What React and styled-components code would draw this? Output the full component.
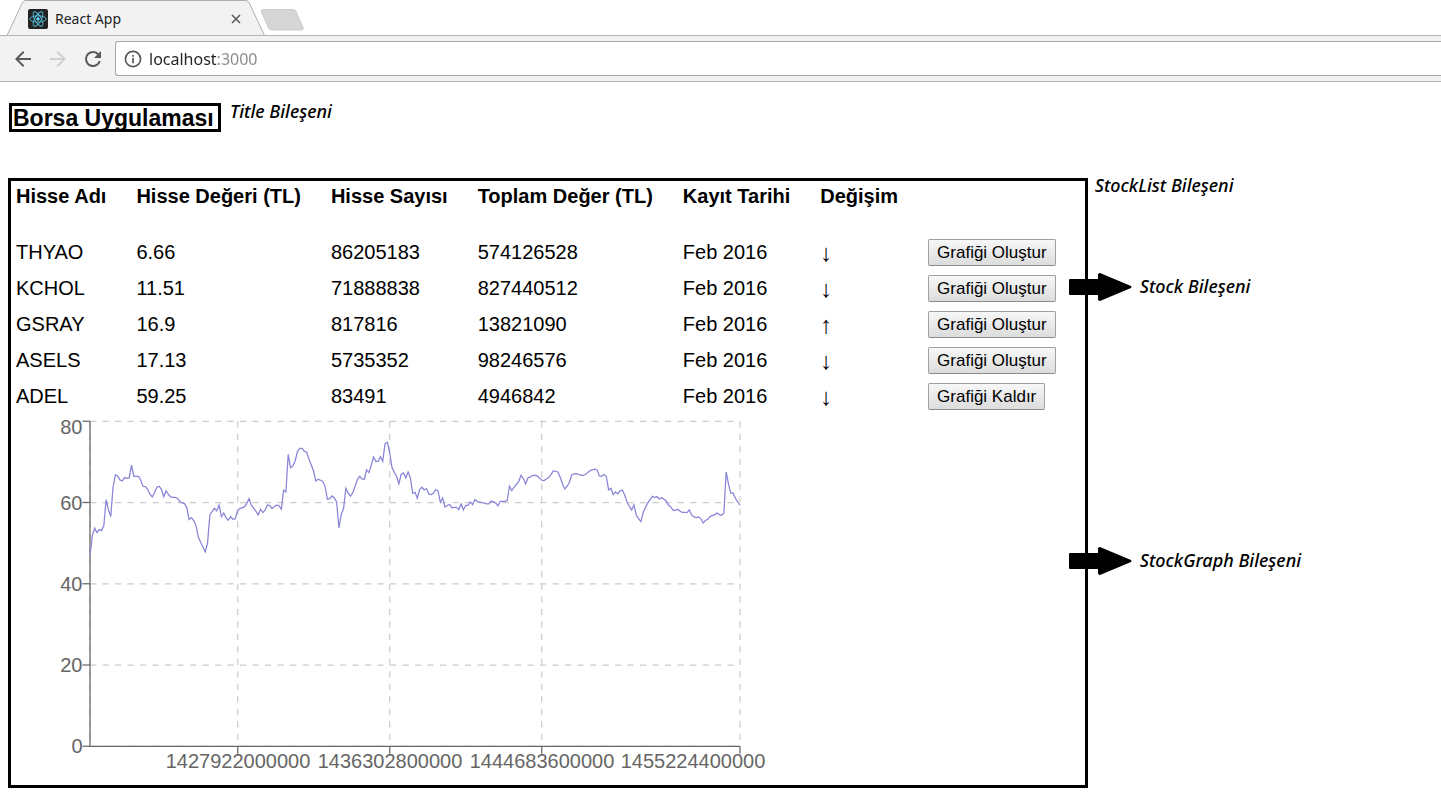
import React from "react";
import styled, { createGlobalStyle } from "styled-components";

const GlobalStyle = createGlobalStyle`
  * { box-sizing: border-box; }
  body {
    margin: 0;
    background: #fff;
    color: #000;
    font-family: "Liberation Sans", Arial, sans-serif;
    font-size: 20px;
    overflow-x: hidden;
  }
`;

const uiFont = `"Noto Sans", "Segoe UI", sans-serif`;

/* ---------- browser window ---------- */

const TabStrip = styled.div`
  display: flex;
  align-items: flex-start;
  height: 36px;
  padding-left: 7px;
  border-bottom: 1px solid #b3b3b3;
`;

const Tab = styled.div`
  position: relative;
  display: flex;
  align-items: center;
  width: 258px;
  height: 36px;
  padding: 2px 19px 0 21px;
  font-family: ${uiFont};
  font-size: 14px;
  line-height: 20px;
`;

const TabShape = styled.svg`
  position: absolute;
  inset: 0;
  width: 100%;
  height: 100%;
  z-index: -1;
`;

const TabTitle = styled.span`
  flex: 1;
  margin-left: 7px;
  color: #222;
`;

const IconButton = styled.button`
  display: flex;
  align-items: center;
  justify-content: center;
  width: ${(p) => p.$size}px;
  height: ${(p) => p.$size}px;
  padding: 0;
  border: 0;
  background: none;
  color: ${(p) => (p.disabled ? "#d0d0d0" : "#5a5a5a")};
`;

const NewTabButton = styled.button`
  width: 44px;
  height: 24px;
  margin: 8px 0 0 -5px;
  padding: 0;
  border: 0;
  background: none;
`;

const Toolbar = styled.div`
  display: flex;
  align-items: center;
  height: 46px;
  padding-left: 11px;
  border-bottom: 1px solid #b6b6b6;
  background: #f2f2f2;
`;

const NavButtons = styled.div`
  display: flex;
  gap: 11px;
`;

const AddressBar = styled.label`
  display: flex;
  flex: 1;
  align-items: center;
  height: 35px;
  margin-left: 10px;
  padding-left: 8px;
  border: 1px solid #a6a6a6;
  border-right: 0;
  border-radius: 3px 0 0 3px;
  background: #fff;
`;

const AddressInput = styled.input`
  flex: 1;
  height: 28px;
  margin-left: 7px;
  padding: 0;
  border: 0;
  outline: 0;
  font-family: ${uiFont};
  font-size: 16px;
  color: transparent;
  background: linear-gradient(to right, #222 68px, #888 68px);
  -webkit-background-clip: text;
  background-clip: text;
`;

/* ---------- page ---------- */

const Page = styled.main`
  padding: 21px 8px 12px;
`;

const TitleRow = styled.div`
  display: flex;
  align-items: flex-start;
  gap: 9px;
  margin: 0 0 46px 1px;
`;

const Title = styled.h1`
  width: 212px;
  height: 29px;
  margin: 0;
  padding-left: 1px;
  border: 3px solid #000;
  font-size: 23px;
  line-height: 25px;
  white-space: nowrap;
`;

const Note = styled.span`
  padding-bottom: 2px;
  font-family: ${uiFont};
  font-size: 18px;
  font-style: italic;
  font-weight: 500;
  line-height: 16px;
  white-space: nowrap;
`;

const Content = styled.div`
  display: flex;
  align-items: stretch;
`;

const StockListPanel = styled.section`
  flex: none;
  border: 3px solid #000;
`;

const StockTable = styled.table`
  margin-left: 5px;
  border-collapse: collapse;
  white-space: nowrap;
`;

const HeadCell = styled.th`
  height: 53px;
  padding: 3px 30px 0 0;
  line-height: 24px;
  text-align: left;
  vertical-align: top;
`;

const Cell = styled.td`
  height: 36px;
  padding: 0 30px 0 0;
  line-height: 24px;
`;

const ChangeCell = styled(Cell)`
  padding-top: 2px;
  font-family: "Liberation Serif", serif;
  font-size: 24px;
`;

const ActionCell = styled(Cell)`
  padding: 1px 29px 0 0;
`;

const GraphButton = styled.button`
  display: block;
  height: 27px;
  padding: 0 8px;
  border: 1px solid #a0a0a0;
  border-bottom-color: #8c8c8c;
  border-radius: 2px;
  background: linear-gradient(#f7f7f7, #dcdcdc);
  color: #000;
  font-family: inherit;
  font-size: 17px;
  line-height: 24px;
`;

const Graph = styled.svg`
  display: block;
  width: 800px;
  height: 371px;
  font-size: 20px;
`;

const NoteColumn = styled.aside`
  display: flex;
  flex: 1;
  flex-direction: column;
`;

const NoteRow = styled.div`
  position: relative;
  display: flex;
  align-items: center;
  gap: 8px;
  height: 28px;
  margin-top: ${(p) => p.$top}px;
  margin-left: ${(p) => (p.$pointing ? -19 : 7)}px;
`;

function ReactLogo() {
  return (
    <svg width="20" height="20" viewBox="0 0 20 20">
      <rect width="20" height="20" rx="2" fill="#222" />
      <g fill="none" stroke="#53c1de" strokeWidth=".900">
        <ellipse cx="10" cy="10" rx="8.200" ry="3.200" />
        <ellipse cx="10" cy="10" rx="8.200" ry="3.200" transform="rotate(60 10 10)" />
        <ellipse cx="10" cy="10" rx="8.200" ry="3.200" transform="rotate(120 10 10)" />
      </g>
      <circle cx="10" cy="10" r="1.700" fill="#61dafb" />
    </svg>
  );
}

function NavIcon({ d }) {
  return (
    <svg width="24" height="24" viewBox="0 0 24 24" fill="currentColor">
      <path d={d} />
    </svg>
  );
}

function Arrow() {
  return (
    <svg width="63" height="28" viewBox="0 0 63 28">
      <path d="M1 6H29V1.500Q29 0 31 0L62 13Q63 14 62 15L31 28Q29 28 29 26V22H1Q0 22 0 21V7Q0 6 1 6Z" />
    </svg>
  );
}

function Browser() {
  return (
    <header>
      <TabStrip>
        <Tab>
          <TabShape viewBox="0 0 258 36">
            <path d="M0 36L15.500 2.500Q16.500 .5 18.500 .5H239Q241 .5 242 2.500L257.500 36Z" fill="#f2f2f2" />
            <path d="M0 35.500L15.500 2.500Q16.500 .5 18.500 .5H239Q241 .5 242 2.500L257.500 35.500" fill="none" stroke="#adadad" />
          </TabShape>
          <ReactLogo />
          <TabTitle>React App</TabTitle>
          <IconButton $size={20} aria-label="Close tab">
            <svg width="10" height="10" viewBox="0 0 10 10" stroke="currentColor" strokeWidth="1.600">
              <path d="M1 1L9 9M9 1L1 9" />
            </svg>
          </IconButton>
        </Tab>
        <NewTabButton aria-label="New tab">
          <svg width="44" height="24" viewBox="0 0 44 24">
            <path d="M3 1.500H33Q35 1.500 36 3.500L43 19.500Q44 22 41.500 22H12Q9.500 22 8.500 20L1.500 4Q.5 1.500 3 1.500Z" fill="#d6d6d6" stroke="#cacaca" />
          </svg>
        </NewTabButton>
      </TabStrip>
      <Toolbar>
        <NavButtons>
          <IconButton $size={24} aria-label="Back">
            <NavIcon d="M20 11H7.830l5.590-5.590L12 4l-8 8 8 8 1.410-1.410L7.830 13H20v-2z" />
          </IconButton>
          <IconButton $size={24} aria-label="Forward" disabled>
            <NavIcon d="M12 4l-1.410 1.410L16.170 11H4v2h12.170l-5.580 5.590L12 20l8-8z" />
          </IconButton>
          <IconButton $size={24} aria-label="Reload">
            <NavIcon d="M17.650 6.350A7.960 7.960 0 0 0 12 4a8 8 0 1 0 7.730 10h-2.080A6 6 0 1 1 12 6c1.660 0 3.140.69 4.220 1.780L13 11h7V4l-2.350 2.350z" />
          </IconButton>
        </NavButtons>
        <AddressBar>
          <svg width="18" height="18" viewBox="0 0 18 18" fill="none" stroke="#5a5a5a">
            <circle cx="9" cy="9" r="7.600" strokeWidth="1.700" />
            <path d="M9 8V13.200M9 5V6.700" strokeWidth="1.700" />
          </svg>
          <AddressInput aria-label="Address" defaultValue="localhost:3000" spellCheck={false} />
        </AddressBar>
      </Toolbar>
    </header>
  );
}

/* ---------- data ---------- */

const columns = ["Hisse Adı", "Hisse Değeri (TL)", "Hisse Sayısı", "Toplam Değer (TL)", "Kayıt Tarihi", "Değişim"];

const stocks = [
  { values: ["THYAO", "6.66", "86205183", "574126528", "Feb 2016"], change: "↓" },
  { values: ["KCHOL", "11.51", "71888838", "827440512", "Feb 2016"], change: "↓" },
  { values: ["GSRAY", "16.9", "817816", "13821090", "Feb 2016"], change: "↑" },
  { values: ["ASELS", "17.13", "5735352", "98246576", "Feb 2016"], change: "↓" },
  { values: ["ADEL", "59.25", "83491", "4946842", "Feb 2016"], change: "↓", open: true },
];

// Closing prices as depth below the top of the plot, three units to a pixel.
const series = [
  437, 378, 355, 368, 359, 362, 347, 269, 300, 320, 232, 195, 198, 210, 213, 203,
  205, 204, 166, 199, 199, 199, 211, 229, 230, 238, 253, 261, 248, 232, 229, 238,
  260, 243, 253, 261, 262, 262, 266, 275, 279, 281, 293, 329, 323, 332, 347, 382,
  397, 411, 426, 400, 315, 304, 295, 303, 285, 320, 309, 323, 331, 320, 328, 327,
  302, 296, 293, 291, 281, 266, 286, 295, 304, 315, 298, 308, 300, 285, 287, 296,
  290, 286, 287, 298, 241, 246, 133, 174, 168, 153, 125, 115, 115, 124, 127, 148,
  165, 184, 213, 208, 211, 215, 230, 268, 266, 258, 264, 277, 354, 314, 296, 235,
  250, 259, 249, 229, 209, 199, 207, 208, 180, 188, 167, 141, 154, 154, 140, 154,
  101, 97, 128, 172, 187, 199, 222, 193, 189, 204, 186, 204, 250, 247, 265, 239,
  232, 240, 236, 252, 254, 250, 239, 243, 277, 264, 291, 287, 283, 294, 292, 292,
  299, 282, 300, 286, 286, 276, 284, 269, 275, 276, 278, 279, 282, 282, 273, 276,
  279, 288, 274, 274, 274, 272, 229, 242, 232, 223, 215, 196, 206, 222, 204, 201,
  197, 196, 198, 204, 211, 212, 207, 203, 194, 183, 184, 186, 202, 222, 237, 229,
  217, 195, 192, 191, 193, 196, 196, 193, 188, 182, 180, 178, 180, 198, 199, 194,
  200, 240, 235, 254, 246, 252, 242, 241, 256, 277, 289, 300, 285, 316, 326, 335,
  307, 293, 279, 269, 259, 263, 260, 267, 263, 268, 273, 286, 291, 301, 301, 298,
  304, 307, 307, 308, 300, 315, 321, 323, 321, 326, 339, 332, 328, 320, 317, 314,
  309, 314, 316, 310, 186, 222, 250, 249, 265, 276, 286,
];

const plot = { left: 79, top: 7.25, width: 650, height: 325 };
const yTicks = [80, 60, 40, 20, 0];
const xTicks = [
  { label: "1427922000000", x: 147.75, labelX: 148 },
  { label: "1436302800000", x: 299.75, labelX: 300 },
  { label: "1444683600000", x: 451.75, labelX: 452 },
  { label: "1455224400000", x: 650, labelX: 603 },
];

function StockGraph() {
  const bottom = plot.height;
  const step = plot.width / (series.length - 1);
  const points = series.map((v, i) => `${(i * step).toFixed(2)},${((v - 34) / 3).toFixed(2)}`).join(" ");
  return (
    <Graph viewBox="0 0 800 371" role="img" aria-label="ADEL">
      <g transform={`translate(${plot.left} ${plot.top})`} fill="none" strokeWidth="1.250">
        <g stroke="#ccc" strokeDasharray="6.250 6.250">
          {yTicks.map((t, i) => (
            <path key={t} d={`M0 ${i * 81.25}H${plot.width}`} />
          ))}
          {[0, ...xTicks.map((t) => t.x)].map((x) => (
            <path key={x} d={`M${x} 0V${bottom}`} />
          ))}
        </g>
        <g stroke="#666">
          <path d={`M0 0V${bottom}H${plot.width}`} />
          {yTicks.map((t, i) => (
            <path key={t} d={`M-7.500 ${i * 81.25}H0`} />
          ))}
          {xTicks.map((t) => (
            <path key={t.label} d={`M${t.x} ${bottom}v7.500`} />
          ))}
        </g>
        <polyline points={points} stroke="#8884d8" />
        <g fill="#666" stroke="none">
          {yTicks.map((t, i) => (
            <text key={t} x="-7.500" y={i === 0 ? 12.5 : i * 81.25 + 7} textAnchor="end">
              {t}
            </text>
          ))}
          {xTicks.map((t) => (
            <text key={t.label} x={t.labelX} y={bottom + 22} textAnchor="middle">
              {t.label}
            </text>
          ))}
        </g>
      </g>
    </Graph>
  );
}

function StockList() {
  return (
    <StockListPanel>
      <StockTable>
        <thead>
          <tr>
            {columns.map((c) => (
              <HeadCell key={c} scope="col">{c}</HeadCell>
            ))}
            <HeadCell as="td" />
          </tr>
        </thead>
        <tbody>
          {stocks.map(({ values, change, open }) => (
            <tr key={values[0]}>
              {values.map((value, i) => (
                <Cell key={i}>{value}</Cell>
              ))}
              <ChangeCell>{change}</ChangeCell>
              <ActionCell>
                <GraphButton>{open ? "Grafiği Kaldır" : "Grafiği Oluştur"}</GraphButton>
              </ActionCell>
            </tr>
          ))}
        </tbody>
      </StockTable>
      <StockGraph />
    </StockListPanel>
  );
}

export default function App() {
  return (
    <>
      <GlobalStyle />
      <Browser />
      <Page>
        <TitleRow>
          <Title>Borsa Uygulaması</Title>
          <Note>Title Bileşeni</Note>
        </TitleRow>
        <Content>
          <StockList />
          <NoteColumn>
            <NoteRow $top={-6}>
              <Note>StockList Bileşeni</Note>
            </NoteRow>
            <NoteRow $top={73} $pointing>
              <Arrow />
              <Note>Stock Bileşeni</Note>
            </NoteRow>
            <NoteRow $top={246} $pointing>
              <Arrow />
              <Note>StockGraph Bileşeni</Note>
            </NoteRow>
          </NoteColumn>
        </Content>
      </Page>
    </>
  );
}
